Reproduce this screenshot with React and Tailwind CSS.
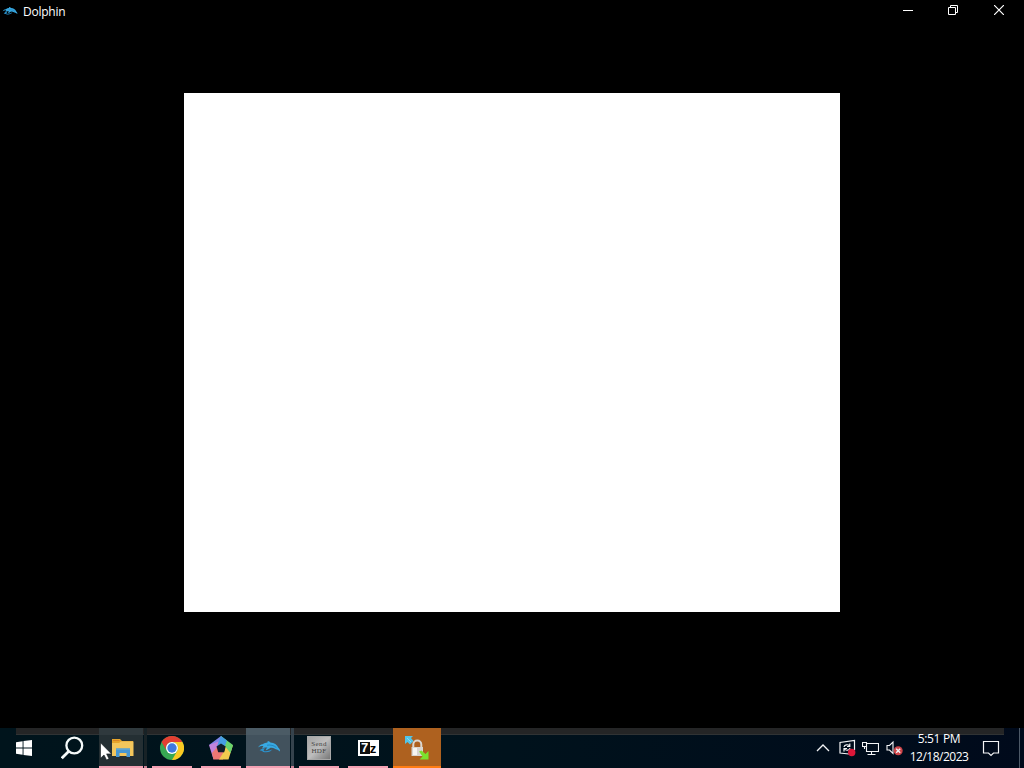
import clsx from 'clsx';

const DolphinIcon = ({ className }) => (
  <svg viewBox="0 0 24 12" className={className}>
    <path
      d="M1 6.4 C2.2 4.4 3.6 3.4 5.6 3.2 C7.4 2.2 8.8 1.7 10.4 1.5 L10.8 0 C12 .2 12.8 .8 13.4 1.5 C17.2 1.6 20.2 3.6 21.4 6.8 C22.4 7.6 23.2 9 23 10.6 C21.6 9.2 20.4 8.6 18.8 8.2 C17 7.2 15.2 6.8 13.4 6.8 C12.2 7.6 11 8.8 8.8 9.2 C9.2 8 9.6 7.2 10.4 6.6 C8.4 6.2 6.8 6.4 5 7.4 L6.4 5 C4.4 4.9 2.8 5.3 1 6.4 Z"
      fill="#38a9e2"
    />
    <path d="M2.6 9.6 C4.4 8 6 7 7.8 7.4 C6.8 8.4 6.6 9.2 6.8 10 C10 10.6 13.2 9.8 15.6 8 C14 10.6 10.6 12 6.4 11 C5 10 4 9.6 2.6 9.6 Z" fill="#2a94d0" />
    <path d="M10 4.2 C13.4 3.6 17 4.4 19.4 6.6" stroke="#1a75ad" strokeWidth=".7" fill="none" />
  </svg>
);

const WindowsIcon = () => (
  <svg width="16" height="16" viewBox="0 0 16 16" fill="#fff">
    <path d="M0 2.2 L6.6 1.2 V7.5 H0 Z M7.5 1.1 L16 0 V7.5 H7.5 Z M0 8.5 H6.6 V14.8 L0 13.8 Z M7.5 8.5 H16 V16 L7.5 14.9 Z" />
  </svg>
);

const SearchIcon = () => (
  <svg width="24" height="24" viewBox="0 0 24 24" fill="none" stroke="#f5fafa" strokeWidth="2.3">
    <circle cx="13.3" cy="9.5" r="7.9" />
    <path d="M7.8 15.2 L.8 22.2" strokeWidth="2.7" />
  </svg>
);

const FolderIcon = () => (
  <svg width="22" height="18" viewBox="0 0 22 18">
    <path d="M0 0 H8 L10 2 H21 V17 H0 Z" fill="#e6a52c" />
    <path d="M0 4 H7 L9 2.5 H21.5 V17 H0 Z" fill="#f3c65c" />
    <path d="M1 1 H7 L8 2 H1 Z" fill="#d88424" />
    <path d="M4 9.5 H18 V18 H14.5 V14 H7.5 V18 H4 Z" fill="#4697d3" />
    <path d="M4 9.5 H18 V11 H4 Z" fill="#5fa4d2" />
  </svg>
);

const ChromeIcon = () => (
  <svg width="24" height="24" viewBox="0 0 24 24">
    <circle cx="12" cy="12" r="12" fill="#37a852" />
    <path d="M1.6 6 A12 12 0 0 1 22.4 6 H12 A6 6 0 0 0 6.8 15 Z" fill="#e33f32" />
    <path d="M22.4 6 A12 12 0 0 1 12 24 L17.2 15 A6 6 0 0 0 12 6 Z" fill="#fbc922" />
    <circle cx="12" cy="12" r="6" fill="#fff" />
    <circle cx="12" cy="12" r="4.7" fill="#3e79df" />
  </svg>
);

const PentagonIcon = () => (
  <svg width="24" height="24" viewBox="0 0 24 24">
    <path d="M12 0 L0 9 L8.2 10.5 L15 8 Z" fill="#7d84ea" />
    <path d="M0 9 L4.5 23.5 L9.6 16 L8.2 10.5 L9.5 5.5 Z" fill="#c183dc" />
    <path d="M3 17 L4.5 23.5 H14 L15 15 L9.6 16 L8.2 11 Z" fill="#ee7773" />
    <path d="M10 23.5 H19.5 L24 9 L16.2 10.5 L15 15.5 Z" fill="#f3ca4f" />
    <path d="M12 0 L24 9 L21.5 17 L16.2 10.5 L11.8 8 Z" fill="#69d36d" />
    <path d="M12 0 L18 4.5 L15.8 10.3 L11.8 8 L8 10.4 Z" fill="#459de3" />
    <path d="M12 7.4 L16.7 10.6 L15.2 16.3 H9.2 L7.5 10.6 Z" fill="#101c2b" />
  </svg>
);

const SendIcon = () => (
  <div className="flex h-6 w-6 flex-col items-center justify-center border border-[#a8a8a8] bg-linear-to-br from-[#a6a6a6] via-[#bdbdbd] to-[#777] font-['Liberation_Serif',serif] text-[7px] leading-[7px] tracking-[0.4px] text-[#3f3f3f]">
    <span>Send</span>
    <span>HDF</span>
  </div>
);

const SevenZipIcon = () => (
  <div className="flex h-4 w-[21px] items-center border-2 border-white bg-white font-['Liberation_Sans',sans-serif] font-bold">
    <span className="flex h-3 w-[10px] items-center justify-center bg-[#101010] text-[13px] leading-3 text-white">7</span>
    <span className="flex-1 pt-[2px] text-center text-[13px] leading-3 text-black">z</span>
  </div>
);

const LockIcon = () => (
  <svg width="24" height="24" viewBox="0 0 24 24">
    <path d="M0 0 H8 L6 2 L8.5 5 L5 8.5 L2.5 6 L0 8 Z" fill="#52c5e8" />
    <path d="M2 2 L6 6" stroke="#8bdcf2" strokeWidth="1" />
    <path d="M8.3 12 V8.5 A4 4 0 0 1 16.3 8.5 V12" fill="none" stroke="#dad6d1" strokeWidth="2" />
    <path d="M6.5 11 H18 V20 H6.5 Z" fill="#d8d5d1" />
    <path d="M8 12 H12 V19 H8 Z" fill="#f6f5f2" />
    <path d="M14 15.5 L16.5 14.5 L20.5 18 L23.5 15 V23.5 H14.5 L17.5 20.5 Z" fill="#7be22d" />
  </svg>
);

const CursorIcon = () => (
  <svg width="13" height="19" viewBox="0 0 13 19" className="absolute top-[14px] left-[2px]">
    <path d="M.5 .8 V16.2 L4 13 L6.6 18 L9 16.8 L6.6 11.9 H11.5 Z" fill="#fff" stroke="#121a1d" strokeWidth=".6" />
  </svg>
);

const apps = [
  { name: 'explorer', icon: <FolderIcon />, hover: true, stacked: true },
  { name: 'chrome', icon: <ChromeIcon /> },
  { name: 'mega', icon: <PentagonIcon /> },
  { name: 'dolphin', icon: <DolphinIcon className="h-3 w-6" />, active: true, stacked: true },
  { name: 'send', icon: <SendIcon /> },
  { name: '7zip', icon: <SevenZipIcon /> },
  { name: 'lock', icon: <LockIcon />, alert: true },
];

const AppButton = ({ app }) => {
  const filled = app.hover || app.active;
  return (
    <div className={clsx('relative flex h-10 w-[49px]', app.alert || filled ? 'pl-px' : 'px-1')}>
      <div
        className={clsx(
          'relative flex h-10 items-center justify-center',
          app.alert && 'w-12 bg-[#ae611f]',
          app.active && 'w-11 bg-[#42525d]',
          app.hover && 'w-11 bg-[#242f33]',
          !app.alert && !filled && 'ml-px w-10'
        )}
      >
        {filled && <span className="absolute inset-x-0 top-0 h-[7px] bg-white/5" />}
        <span className={clsx('relative', app.hover && 'left-[2px]', app.active && 'left-px -top-px')}>
          {app.icon}
        </span>
        <span className={clsx('absolute inset-x-0 bottom-0 h-[2px]', app.alert ? 'bg-[#ff7c13]' : 'bg-[#f3a0b3]')} />
      </div>
      {app.stacked && (
        <div className={clsx('relative ml-px h-10 w-[3px]', app.active ? 'bg-[#35434d]' : 'bg-[#172226]')}>
          <span className="absolute inset-x-0 bottom-0 h-[2px] bg-[#c98295]" />
        </div>
      )}
    </div>
  );
};

const Tray = () => (
  <div className="relative ml-auto flex h-10 items-center">
    <svg width="14" height="8" viewBox="0 0 14 8" className="mr-[9px]" fill="none" stroke="#f3f4f6" strokeWidth="1.3">
      <path d="M1 7 L7 1 L13 7" />
    </svg>
    <svg width="17" height="18" viewBox="0 0 17 18" className="mr-[6px]" fill="none" stroke="#f3f4f6" strokeWidth="1.2">
      <path d="M10 15 L1 14 V3.5 L15.5 1.5 V11" />
      <path d="M5 8 C5.5 5.5 9 5 10.5 7 M10.8 4.5 V7.5 H8 M11 9 C10.5 11.5 7 12 5.5 10 M5 12.5 V9.5 H8" />
      <circle cx="12.7" cy="13.5" r="3.7" fill="#dc1739" stroke="none" />
    </svg>
    <svg width="17" height="15" viewBox="0 0 17 15" className="mr-[7px]" fill="none" stroke="#f3f4f6" strokeWidth="1.1">
      <path d="M5 2.5 H16.5 V10.5 H4.5 V5.5 M9.5 10.5 V13.5 M5.5 13.5 H13.5" />
      <path d="M.5 1.5 H4.5 V5.5 H.5 Z M2.5 5.5 V8" />
    </svg>
    <svg width="17" height="16" viewBox="0 0 17 16" className="mr-[7px]" fill="none" stroke="#f3f4f6" strokeWidth="1.1">
      <path d="M1 5.5 H3.5 L7 2 V13.5 L3.5 10 H1 Z" />
      <circle cx="12.2" cy="10.8" r="4.5" fill="#cf4549" stroke="none" />
      <path d="M10.2 8.8 L14.2 12.8 M14.2 8.8 L10.2 12.8" strokeWidth="1.4" />
    </svg>
    <div className="flex w-[58px] flex-col items-center text-[12px] leading-[18px] whitespace-nowrap text-white">
      <span className="tracking-[-0.35px]">5:51 PM</span>
      <span className="tracking-[-0.5px]">12/18/2023</span>
    </div>
    <svg width="18" height="17" viewBox="0 0 18 17" className="mr-[19px] ml-[14px]" fill="none" stroke="#f3f4f6" strokeWidth="1.2">
      <path d="M1.5 1.5 H16.5 V13 H11.5 L9 15.5 L6.5 13 H1.5 Z" />
    </svg>
    <div className="h-10 w-[5px] border-l border-[#4d5967]" />
  </div>
);

const TitleBar = () => (
  <header className="flex h-[22px] items-center text-white">
    <DolphinIcon className="mb-px ml-[2px] h-2 w-4" />
    <h1 className="mt-[2px] ml-[5px] text-[12px] leading-4 tracking-[-0.25px]">Dolphin</h1>
    <div className="mb-[2px] ml-auto flex items-center">
      <button className="flex h-5 w-[46px] items-center justify-center">
        <svg width="10" height="10" viewBox="0 0 10 10"><path d="M0 5.5 H10" stroke="#fff" /></svg>
      </button>
      <button className="flex h-5 w-11 items-center justify-center">
        <svg width="10" height="10" viewBox="0 0 10 10" fill="none" stroke="#fff">
          <path d="M.5 2.5 H7.5 V9.5 H.5 Z M2.5 2.5 V.5 H9.5 V7.5 H7.5" />
        </svg>
      </button>
      <button className="mr-[1px] flex h-5 w-12 items-center justify-center">
        <svg width="10" height="10" viewBox="0 0 10 10" stroke="#fff" strokeWidth="1.2">
          <path d="M0 0 L10 10 M10 0 L0 10" />
        </svg>
      </button>
    </div>
  </header>
);

const App = () => (
  <div className="flex h-[768px] w-[1024px] flex-col overflow-hidden bg-black font-['Open_Sans','Noto_Sans',sans-serif]">
    <TitleBar />
    <main className="flex flex-1 justify-center pt-[71px]">
      <div className="h-[519px] w-[656px] bg-white" />
    </main>
    <footer className="relative flex h-10 bg-linear-to-r from-[#00141c] via-[#00121c] to-[#000a1b]">
      <div className="absolute top-0 right-5 left-4 h-[7px] border-b border-[#303334] bg-[#242526]" />
      <div className="relative flex h-10 w-12 items-center justify-center">
        <WindowsIcon />
      </div>
      <div className="relative flex h-10 w-[50px] items-center justify-center">
        <SearchIcon />
      </div>
      <div className="relative flex">
        {apps.map((app) => (
          <AppButton key={app.name} app={app} />
        ))}
        <CursorIcon />
      </div>
      <Tray />
    </footer>
  </div>
);

export default App;
